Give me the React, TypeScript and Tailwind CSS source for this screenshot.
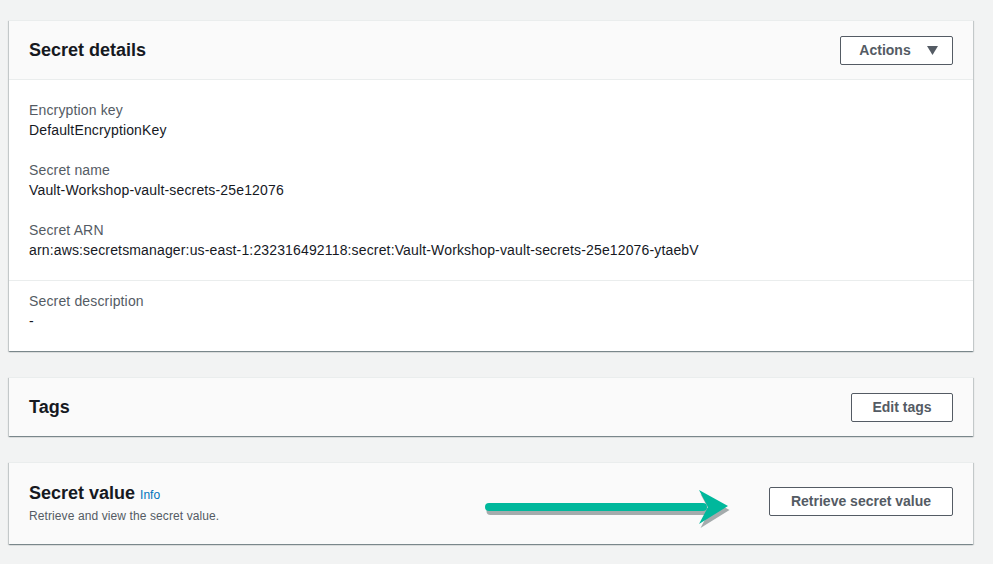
import { Fragment } from "react";

const font = { fontFamily: '"Liberation Sans", Arial, sans-serif' };

const Button = ({ children, className = "" }: { children: React.ReactNode; className?: string }) => (
  <button
    type="button"
    className={`flex h-[29px] items-center justify-center rounded-[2px] border border-[#545b64] bg-white text-[14px] font-bold text-[#545b64] ${className}`}
  >
    {children}
  </button>
);

const Field = ({ label, value }: { label: string; value: string }) => (
  <div className="flex flex-col tracking-[0.15px]">
    <span className="text-[14px] leading-5 text-[#545b64]">{label}</span>
    <span className="text-[14px] leading-5 text-[#16191f]">{value}</span>
  </div>
);

const card =
  "border-t border-[#eaeded] shadow-[0_1px_1px_0_rgba(0,28,36,0.3),1px_1px_1px_0_rgba(0,28,36,0.15),-1px_1px_1px_0_rgba(0,28,36,0.15)]";

const Arrow = () => (
  <svg className="absolute left-[465px] top-[25px]" width="262" height="40" viewBox="0 0 262 40">
    {/* shadow */}
    <g fill="#5f6b6d" opacity="0.55" transform="translate(1.5,3)">
      <rect x="11" y="16" width="222" height="8" rx="4" />
      <polygon points="225,3 254,19 225,37 234,20" />
    </g>
    <g fill="#00b89c">
      <rect x="11" y="15" width="222" height="8" rx="4" />
      <polygon points="225,2 254,18 225,36 234,19" />
    </g>
  </svg>
);

export default function App() {
  return (
    <div className="min-h-[564px] w-full bg-[#f2f3f3] pb-6 pl-[9px] pr-[20px] pt-[20px]" style={font}>
      <div className="flex flex-col gap-[26px]">
        {/* Secret details */}
        <div className={`bg-white ${card}`}>
          <div className="flex h-[59px] items-center justify-between border-b border-[#eaeded] bg-[#fafafa] px-5">
            <h2 className="text-[18px] font-bold text-[#16191f]">Secret details</h2>
            <Button className="w-[113px] gap-4 pl-1">
              <span>Actions</span>
              <svg width="11" height="9" viewBox="0 0 11 9">
                <polygon points="0,0 11,0 5.5,9" fill="#545b64" />
              </svg>
            </Button>
          </div>
          <div className="flex flex-col gap-5 border-b border-[#eaeded] px-5 pb-5 pt-5">
            <Field label="Encryption key" value="DefaultEncryptionKey" />
            <Field label="Secret name" value="Vault-Workshop-vault-secrets-25e12076" />
            <Field
              label="Secret ARN"
              value="arn:aws:secretsmanager:us-east-1:232316492118:secret:Vault-Workshop-vault-secrets-25e12076-ytaebV"
            />
          </div>
          <div className="px-5 pb-5 pt-[10px]">
            <Field label="Secret description" value="-" />
          </div>
        </div>

        {/* Tags */}
        <div className={`flex h-[59px] items-center justify-between bg-[#fafafa] px-5 ${card}`}>
          <h2 className="text-[18px] font-bold text-[#16191f]">Tags</h2>
          <Button className="w-[102px]">Edit tags</Button>
        </div>

        {/* Secret value */}
        <div className={`relative flex h-[82px] items-start justify-between bg-[#fafafa] px-5 pt-[18px] ${card}`}>
          <div className="flex flex-col">
            <div className="flex items-baseline gap-[5px]">
              <h2 className="text-[18px] font-bold leading-6 text-[#16191f]">Secret value</h2>
              <span className="text-[12px] text-[#0073bb]">Info</span>
            </div>
            <span className="mt-[3px] text-[12px] leading-4 tracking-[0.1px] text-[#545b64]">
              Retrieve and view the secret value.
            </span>
          </div>
          <Arrow />
          <Button className="mt-[6px] w-[184px]">Retrieve secret value</Button>
        </div>
      </div>
    </div>
  );
}
